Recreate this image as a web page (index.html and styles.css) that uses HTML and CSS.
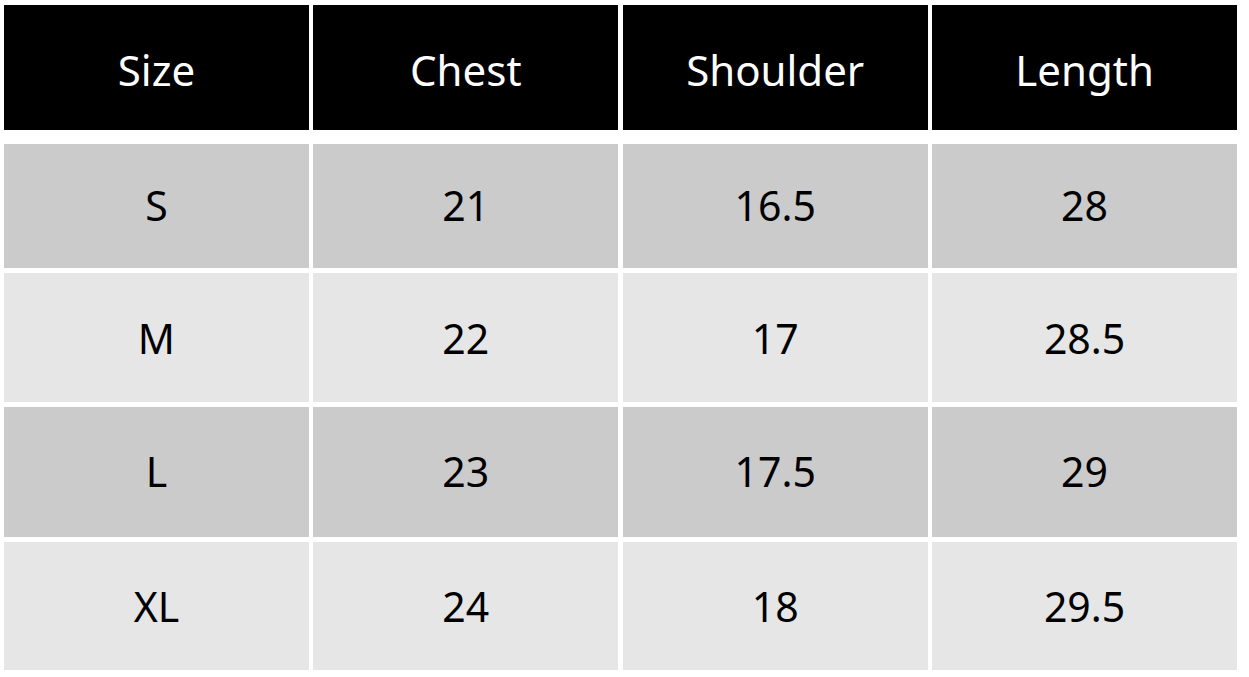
FILE: index.html
```html
<!DOCTYPE html>
<html>
<head>
<meta charset="utf-8">
<link rel="stylesheet" href="styles.css">
</head>
<body>
<div class="table">
  <div class="row head">
    <div class="cell">Size</div>
    <div class="cell">Chest</div>
    <div class="cell">Shoulder</div>
    <div class="cell">Length</div>
  </div>
  <div class="row dark r1">
    <div class="cell">S</div>
    <div class="cell">21</div>
    <div class="cell">16.5</div>
    <div class="cell">28</div>
  </div>
  <div class="row light r2">
    <div class="cell">M</div>
    <div class="cell">22</div>
    <div class="cell">17</div>
    <div class="cell">28.5</div>
  </div>
  <div class="row dark r3">
    <div class="cell">L</div>
    <div class="cell">23</div>
    <div class="cell">17.5</div>
    <div class="cell">29</div>
  </div>
  <div class="row light r4">
    <div class="cell">XL</div>
    <div class="cell">24</div>
    <div class="cell">18</div>
    <div class="cell">29.5</div>
  </div>
</div>
</body>
</html>
```
FILE: styles.css
```css
html, body {
  margin: 0;
  padding: 0;
  background: #ffffff;
}
body {
  font-family: "Noto Sans", "Open Sans", sans-serif;
}
.table {
  display: flex;
  flex-direction: column;
  gap: 5px;
  width: 1233px;
  padding: 5px 0 0 4px;
}
.row {
  display: grid;
  grid-template-columns: repeat(4, 1fr);
  column-gap: 4.5px;
}
.cell {
  display: flex;
  align-items: center;
  justify-content: center;
  font-size: 41px;
  color: #000;
}
.head { height: 125px; margin-bottom: 9px; }
.head .cell {
  background: #000;
  color: #fff;
  font-size: 42px;
  padding-top: 4px;
}
.dark .cell { background: #cbcbcb; padding-bottom: 2px; }
.light .cell { background: #e6e6e6; }
.r1 { height: 124px; }
.r2 { height: 129px; }
.r3 { height: 130px; }
.r4 { height: 128px; }
```
